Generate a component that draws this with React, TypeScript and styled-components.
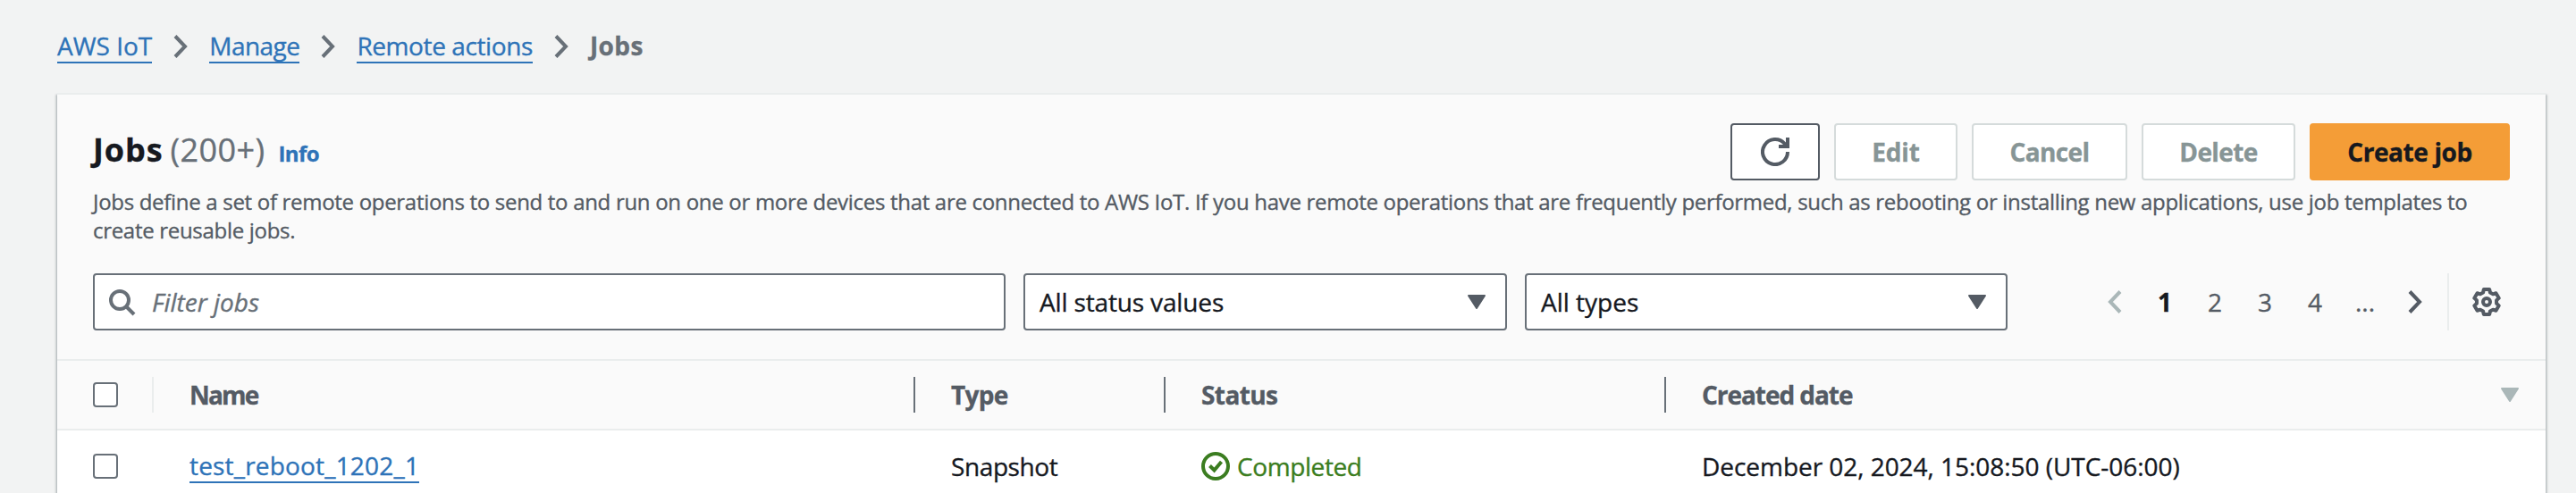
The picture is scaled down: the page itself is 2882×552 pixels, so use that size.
import React from 'react';
import styled, { createGlobalStyle } from 'styled-components';

const Global = createGlobalStyle`
  * { box-sizing: border-box; }
  html, body { margin: 0; background: #f2f3f3; }
  body {
    height: 552px;
    overflow: hidden;
    font-family: 'Open Sans', 'Noto Sans', sans-serif;
    font-size: 28px;
    -webkit-text-stroke: 0.35px currentColor;
    line-height: 40px;
    color: #16191f;
  }
`;

const Page = styled.main`
  width: 2882px;
  height: 552px;
  padding: 32px 34px 0 64px;
  overflow: hidden;
`;

const Breadcrumbs = styled.nav`
  display: flex;
  align-items: flex-start;
  height: 72px;
`;

const Link = styled.a<{ $track?: number }>`
  display: block;
  height: 39px;
  border-bottom: 2px solid #2e73b8;
  color: #2e73b8;
  line-height: 38px;
  white-space: nowrap;
  letter-spacing: ${(p) => p.$track ?? 0}px;
`;

const Crumb = styled.span`
  color: #687078;
  font-weight: 700;
  line-height: 38px;
  letter-spacing: 0.4px;
`;

const Separator = styled.svg`
  display: block;
  width: 32px;
  height: 32px;
  margin: 4px 16px 0;
  flex: none;
`;

const Panel = styled.section`
  width: 2784px;
  height: 500px;
  border-top: 2px solid #eaeded;
  background: #fff;
  box-shadow: 0 2px 2px rgba(0, 28, 36, 0.3), 2px 2px 2px rgba(0, 28, 36, 0.15), -2px 2px 2px rgba(0, 28, 36, 0.15);
`;

const Header = styled.header`
  height: 296px;
  padding: 32px 40px 0;
  background: #fafafa;
`;

const TitleRow = styled.div`
  display: flex;
  justify-content: space-between;
  height: 72px;
`;

const Heading = styled.div`
  display: flex;
  align-items: baseline;
  line-height: 60px;
`;

const Title = styled.h2`
  margin: 0;
  font-size: 36px;
  font-weight: 700;
  letter-spacing: 0.9px;
`;

const Counter = styled.span`
  margin-left: 8px;
  color: #687078;
  font-size: 36px;
  letter-spacing: 0.4px;
`;

const Info = styled.a`
  margin-left: 15px;
  color: #2e73b8;
  font-size: 24px;
  font-weight: 700;
  letter-spacing: -0.6px;
`;

const Actions = styled.div`
  display: flex;
  gap: 16px;
`;

const Button = styled.button<{ $width: number; $kind?: 'primary' | 'disabled'; $track?: number }>`
  display: flex;
  align-items: center;
  justify-content: center;
  width: ${(p) => p.$width}px;
  height: 64px;
  padding: 0;
  border: 2px solid ${(p) => (p.$kind === 'primary' ? '#f49d37' : p.$kind === 'disabled' ? '#d5dbdb' : '#545b64')};
  border-radius: 4px;
  background: ${(p) => (p.$kind === 'primary' ? '#f49d37' : '#fff')};
  color: ${(p) => (p.$kind === 'primary' ? '#16191f' : p.$kind === 'disabled' ? '#879596' : '#545b64')};
  font: 700 28px/40px 'Open Sans', sans-serif;
  letter-spacing: ${(p) => p.$track ?? -0.6}px;
`;

const Description = styled.p`
  margin: 0 0 24px;
  height: 64px;
  width: 2690px;
  color: #545b64;
  font-size: 24px;
  line-height: 32px;
  letter-spacing: -0.304px;
`;

const Toolbar = styled.div`
  display: flex;
  align-items: center;
  gap: 20px;
  height: 64px;
  margin-top: 32px;
`;

const Field = styled.div<{ $width: number }>`
  display: flex;
  align-items: center;
  width: ${(p) => p.$width}px;
  height: 64px;
  padding: 0 16px;
  border: 2px solid #687078;
  border-radius: 4px;
  background: #fff;
`;

const Placeholder = styled.span`
  margin-left: 16px;
  color: #687078;
  font-style: italic;
`;

const SelectValue = styled.span<{ $track: number }>`
  flex: 1;
  letter-spacing: ${(p) => p.$track}px;
`;

const Icon = styled.svg`
  display: block;
  flex: none;
  width: 32px;
  height: 32px;
`;

const Pager = styled.div`
  display: flex;
  align-items: center;
  margin-left: 84px;
`;

const Pages = styled.div`
  display: flex;
  margin: 0 12px 0 12px;
`;

const PageNumber = styled.span<{ $current?: boolean }>`
  width: 56px;
  text-align: center;
  color: ${(p) => (p.$current ? '#16191f' : '#545b64')};
  font-weight: ${(p) => (p.$current ? 700 : 400)};
`;

const Settings = styled.div`
  display: flex;
  align-items: center;
  height: 64px;
  padding-left: 26px;
  border-left: 2px solid #eaeded;
`;

const Row = styled.div<{ $head?: boolean }>`
  display: grid;
  grid-template-columns: 108px 852px 280px 560px 984px;
  height: 80px;
  ${(p) =>
    p.$head &&
    `
    border-top: 2px solid #eaeded;
    border-bottom: 2px solid #eaeded;
    background: #fafafa;
    color: #545b64;
    font-weight: 700;
  `}
`;

const SelectCell = styled.div<{ $divided?: boolean }>`
  display: flex;
  align-items: center;
  height: ${(p) => (p.$divided ? '40px' : '80px')};
  margin-top: ${(p) => (p.$divided ? '18px' : '0')};
  padding-left: 40px;
  border-right: 2px solid ${(p) => (p.$divided ? '#eaeded' : 'transparent')};
`;

const HeadCell = styled.div<{ $last?: boolean; $track: number }>`
  display: flex;
  justify-content: space-between;
  align-items: center;
  height: 40px;
  margin-top: 18px;
  padding: 0 24px 0 40px;
  border-right: ${(p) => (p.$last ? '0' : '2px')} solid #687078;
  letter-spacing: ${(p) => p.$track}px;
`;

const Cell = styled.div<{ $track?: number }>`
  display: flex;
  align-items: center;
  height: 79px;
  padding-left: 40px;
  letter-spacing: ${(p) => p.$track ?? 0}px;
`;

const Checkbox = styled.span`
  width: 28px;
  height: 28px;
  border: 2px solid #687078;
  border-radius: 4px;
  background: #fff;
`;

const Status = styled.span`
  display: flex;
  align-items: center;
  gap: 8px;
  color: #3b7d20;
`;

const Chevron = () => (
  <Separator viewBox="0 0 32 32" fill="none" stroke="#687078" strokeWidth="4">
    <path d="M10 4.5 21 16 10 27.5" />
  </Separator>
);

const Caret = ({ color }: { color: string }) => (
  <Icon viewBox="0 0 32 32" fill={color} stroke={color} strokeWidth="2" strokeLinejoin="round">
    <path d="M7 9h18l-9 14z" />
  </Icon>
);

const gearPath = (() => {
  const profile = [
    [-20.5, 11.2],
    [-13, 14.3],
    [13, 14.3],
    [20.5, 11.2],
  ];
  const points: string[] = [];
  for (let tooth = 0; tooth < 6; tooth++) {
    for (const [offset, radius] of profile) {
      const angle = ((tooth * 60 + offset) * Math.PI) / 180;
      points.push(`${(16 + radius * Math.sin(angle)).toFixed(2)} ${(16 - radius * Math.cos(angle)).toFixed(2)}`);
    }
  }
  return `M${points.join('L')}Z`;
})();

export default function App() {
  return (
    <>
      <Global />
      <Page>
        <Breadcrumbs>
          <Link>AWS IoT</Link>
          <Chevron />
          <Link $track={-0.55}>Manage</Link>
          <Chevron />
          <Link $track={-0.4}>Remote actions</Link>
          <Chevron />
          <Crumb>Jobs</Crumb>
        </Breadcrumbs>
        <Panel>
          <Header>
            <TitleRow>
              <Heading>
                <Title>Jobs</Title>
                <Counter>(200+)</Counter>
                <Info>Info</Info>
              </Heading>
              <Actions>
                <Button $width={100} aria-label="Refresh">
                  <Icon viewBox="0 0 32 32" fill="none" stroke="#545b64" strokeWidth="4">
                    <path d="M30 16A14 14 0 1 1 26.5 6.8L29 10" />
                    <path d="M30 0v10H20" />
                  </Icon>
                </Button>
                <Button $width={138} $kind="disabled" $track={-0.2}>Edit</Button>
                <Button $width={174} $kind="disabled">Cancel</Button>
                <Button $width={172} $kind="disabled">Delete</Button>
                <Button $width={224} $kind="primary" $track={-0.4}>Create job</Button>
              </Actions>
            </TitleRow>
            <Description>
              Jobs define a set of remote operations to send to and run on one or more devices that are connected to AWS
              IoT. If you have remote operations that are frequently performed, such as rebooting or installing new
              applications, use job templates to create reusable jobs.
            </Description>
            <Toolbar>
              <Field $width={1021}>
                <Icon viewBox="0 0 32 32" fill="none" stroke="#687078" strokeWidth="4">
                  <circle cx="12" cy="14" r="10" />
                  <path d="m19 21 9 9" />
                </Icon>
                <Placeholder>Filter jobs</Placeholder>
              </Field>
              <Field $width={541}>
                <SelectValue $track={-0.15}>All status values</SelectValue>
                <Caret color="#545b64" />
              </Field>
              <Field $width={540}>
                <SelectValue $track={0}>All types</SelectValue>
                <Caret color="#545b64" />
              </Field>
              <Pager>
                <Icon viewBox="0 0 32 32" fill="none" stroke="#aab7b8" strokeWidth="4">
                  <path d="M22 4.5 11 16l11 11.5" />
                </Icon>
                <Pages>
                  <PageNumber $current>1</PageNumber>
                  <PageNumber>2</PageNumber>
                  <PageNumber>3</PageNumber>
                  <PageNumber>4</PageNumber>
                  <PageNumber>...</PageNumber>
                </Pages>
                <Icon viewBox="0 0 32 32" fill="none" stroke="#545b64" strokeWidth="4">
                  <path d="M10 4.5 21 16 10 27.5" />
                </Icon>
              </Pager>
              <Settings>
                <Icon viewBox="0 0 32 32" fill="none" stroke="#545b64" strokeWidth="4" strokeLinejoin="round">
                  <path d={gearPath} />
                  <circle cx="16" cy="16" r="4" />
                </Icon>
              </Settings>
            </Toolbar>
          </Header>
          <Row $head>
            <SelectCell $divided>
              <Checkbox />
            </SelectCell>
            <HeadCell $track={-1.8}>Name</HeadCell>
            <HeadCell $track={-0.7}>Type</HeadCell>
            <HeadCell $track={-0.6}>Status</HeadCell>
            <HeadCell $track={-1.05} $last>
              Created date
              <Caret color="#aab7b8" />
            </HeadCell>
          </Row>
          <Row>
            <SelectCell>
              <Checkbox />
            </SelectCell>
            <Cell>
              <Link $track={0.18}>test_reboot_1202_1</Link>
            </Cell>
            <Cell $track={-0.4}>Snapshot</Cell>
            <Cell $track={-0.4}>
              <Status>
                <Icon viewBox="0 0 32 32" fill="none" stroke="#3b7d20" strokeWidth="4">
                  <circle cx="16" cy="16" r="14" />
                  <path d="m9.5 15.5 5 5 8-9.5" />
                </Icon>
                Completed
              </Status>
            </Cell>
            <Cell $track={-0.04}>December 02, 2024, 15:08:50 (UTC-06:00)</Cell>
          </Row>
        </Panel>
      </Page>
    </>
  );
}
